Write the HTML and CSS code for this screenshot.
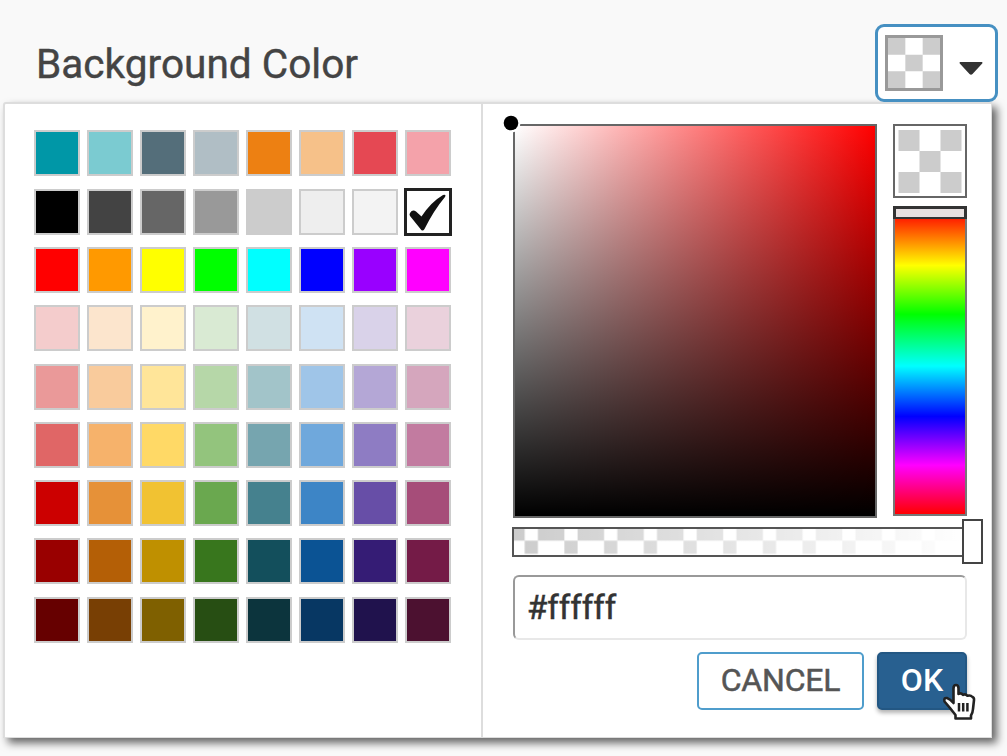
FILE: index.html
```html
<!DOCTYPE html>
<html lang="en">
<head>
<meta charset="utf-8">
<title>Background Color</title>
<link rel="stylesheet" href="styles.css">
</head>
<body>
<header class="header">
  <h1 class="title">Background Color</h1>
  <button class="trigger" aria-label="Choose color">
    <svg class="trigger-preview" viewBox="0 0 51 51" preserveAspectRatio="none"><path fill="#fff" d="M0 0h51v51H0z"/><path fill="#ccc" d="M0 0h17v17H0zM34 0h17v17H34zM17 17h17v17H17zM0 34h17v17H0zM34 34h17v17H34z"/></svg>
    <svg class="caret" viewBox="0 0 24 13"><path fill="#333" d="M1 0h22q1 .8 0 1.800L13.500 12q-1.500 1.500-3 0L1 1.800Q0 .8 1 0z"/></svg>
  </button>
</header>
<main class="panel">
  <section class="palette" id="palette"></section>
  <section class="picker">
    <div class="spectrum">
      <div class="shade"><svg class="shade-dot" viewBox="0 0 20 20"><circle cx="10" cy="10" r="9.500" fill="#fff"/><circle cx="10" cy="10" r="7.300" fill="#000"/></svg></div>
      <div class="side">
        <div class="preview"><svg class="preview-checks" viewBox="0 0 63 63"><path fill="#ccc" d="M0 0h21v21H0zM42 0h21v21H42zM21 21h21v21H21zM0 42h21v21H0zM42 42h21v21H42z"/></svg></div>
        <div class="hue"><span class="hue-handle"></span></div>
      </div>
    </div>
    <div class="alpha">
      <svg class="alpha-checks" width="451" height="26">
        <defs>
          <pattern id="checks" x="-2.500" y="-1.500" width="39.700" height="39.700" patternUnits="userSpaceOnUse"><path fill="#ccc" d="M0 0h13.200v13.200H0zM26.400 0h13.300v13.200H26.400zM13.200 13.200h13.200v13.200H13.200z"/></pattern>
          <linearGradient id="fade"><stop offset="0" stop-color="#fff" stop-opacity="0"/><stop offset="1" stop-color="#fff"/></linearGradient>
        </defs>
        <rect width="451" height="26" fill="url(#checks)"/>
        <rect width="451" height="26" fill="url(#fade)"/>
      </svg>
      <span class="alpha-handle"></span>
    </div>
    <input class="hex" value="#ffffff" aria-label="Hex color">
    <div class="actions">
      <button class="button cancel">CANCEL</button>
      <button class="button ok">OK
        <svg class="cursor" viewBox="0 0 34 38"><path d="M11.500 20V5.500Q11.500 2 14 2t2.500 3.500V11q2.500-1.500 4.500.8 2.500-1.300 4.500 1 3-1 5 1.200 1.800.8 1.500 3L31 26q-.3 4-2 6.500v3H13.500V32L8 25 2.500 18.500Q1.500 14.500 5 15q3 1 6.500 5z" fill="#fff" stroke="#222" stroke-width="2.600" stroke-linejoin="round"/><path d="M17 20v8.500M21.200 20v8.500M25.400 20v8.500" stroke="#222" stroke-width="2.500"/></svg>
      </button>
    </div>
  </section>
</main>
<script src="palette.js"></script>
</body>
</html>
```
FILE: styles.css
```css
* { box-sizing: border-box; }
body {
  margin: 0;
  width: 1007px;
  height: 756px;
  overflow: hidden;
  background: #f9f9f9;
  font-family: Roboto, "Liberation Sans", sans-serif;
}
.header {
  display: flex;
  justify-content: space-between;
  height: 102px;
  padding: 24px 9px 0 36px;
  position: relative;
  z-index: 1;
}
.title {
  margin: 16px 0 0;
  font-size: 40.600px;
  line-height: 48px;
  font-weight: 400;
  color: #444;
  -webkit-text-stroke: .4px #444;
  white-space: nowrap;
}
.trigger {
  display: flex;
  align-items: flex-start;
  gap: 16px;
  width: 123px;
  height: 78px;
  padding: 8px 0 0 7px;
  border: 3px solid #4690c2;
  border-radius: 9px;
  background: #fff;
}
.trigger-preview { width: 58px; height: 56px; border: 3px solid #999; }
.caret { width: 24px; height: 13px; margin-top: 27px; }
.panel {
  display: flex;
  width: 989px;
  height: 636px;
  margin-left: 3px;
  border: 2px solid #ddd;
  border-right-width: 1px;
  border-bottom-width: 1px;
  border-radius: 3px 0 0 0;
  background: #fff;
  box-shadow: 5px 5px 8px rgba(0, 0, 0, .6);
}
.palette {
  display: grid;
  grid-template-columns: repeat(8, 46px);
  grid-auto-rows: 46px;
  gap: 12.300px 7px;
  align-content: start;
  width: 478px;
  padding: 26.400px 0 0 29px;
  border-right: 2px solid #ddd;
}
.swatch { border: 2px solid #ccc; }
.swatch.selected { margin: -1px; border: 3px solid #222; }
.check { display: block; width: 100%; height: 100%; }
.picker { width: 484px; padding: 20px 0 0 30px; }
.spectrum { display: flex; gap: 16px; height: 394px; }
.shade {
  position: relative;
  width: 364px;
  height: 394px;
  border: 2px solid #666;
  background: linear-gradient(to top, #000, transparent), linear-gradient(to right, #fff, #f00);
}
.shade-dot { position: absolute; left: -14px; top: -13px; width: 20px; height: 20px; }
.side { display: flex; flex-direction: column; gap: 9px; }
.preview { width: 74px; height: 74px; padding: 4px 3px; border: 2px solid #666; }
.preview-checks { display: block; width: 64px; height: 63px; }
.hue {
  position: relative;
  width: 74px;
  height: 309px;
  border: 2px solid #777;
  background: linear-gradient(#f00 1%, #ff0 18.500%, #0f0 34.500%, #0ff 51.500%, #00f 68%, #f0f 84%, #f00 100%);
}
.hue-handle {
  position: absolute;
  left: -2px;
  top: -3px;
  width: 74px;
  height: 13px;
  border: 3px solid #333;
  border-bottom-width: 2px;
  background: #e8e0e0;
}
.alpha { position: relative; width: 455px; height: 30px; margin: 9px 0 0 -1px; border: 2px solid #555; }
.alpha-checks { display: block; }
.alpha-handle { position: absolute; right: -18px; top: -10px; width: 21px; height: 45px; border: 2px solid #444; background: #fff; }
.hex {
  display: block;
  width: 454px;
  height: 65px;
  margin-top: 18px;
  padding: 0 12px;
  border: 2px solid;
  border-color: #999 #e8e8e8 #e8e8e8 #999;
  border-radius: 6px;
  background: #fff;
  font: 33px Roboto, "Liberation Sans", sans-serif;
  color: #333;
  -webkit-text-stroke: .5px #333;
}
.actions { display: flex; justify-content: flex-end; gap: 13px; width: 454px; margin-top: 12px; }
.button { height: 58px; padding: 0 0 2px; border-radius: 5px; font: 33px Roboto, "Liberation Sans", sans-serif; }
.cancel { width: 167px; border: 2px solid #4f9dcc; background: #fff; color: #555; font-size: 32px; letter-spacing: -.2px; -webkit-text-stroke: .5px #555; }
.ok { position: relative; width: 90px; border: 2px solid #235783; background: #286090; color: #fff; font-size: 32px; font-weight: 500; box-shadow: 0 3px 4px rgba(0, 0, 0, .3); }
.cursor { position: absolute; left: 63px; top: 29px; width: 34px; height: 38px; }
```
FILE: palette.js
```js
const colors = `
0097a7 7bcbd1 546e7a b0bec5 ed8012 f6c189 e54853 f4a2aa
000000 434343 666666 999999 cccccc eeeeee f3f3f3 ffffff
ff0000 ff9900 ffff00 00ff00 00ffff 0000ff 9900ff ff00ff
f4cccc fce5cd fff2cc d9ead3 d0e0e3 cfe2f3 d9d2e9 ead1dc
ea9999 f9cb9c ffe599 b6d7a8 a2c4c9 9fc5e8 b4a7d6 d5a6bd
e06666 f6b26b ffd966 93c47d 76a5af 6fa8dc 8e7cc3 c27ba0
cc0000 e69138 f1c232 6aa84f 45818e 3d85c6 674ea7 a64d79
990000 b45f06 bf9000 38761d 134f5c 0b5394 351c75 741b47
660000 783f04 7f6000 274e13 0c343d 073763 20124d 4c1130`.trim().split(/\s+/);
const palette = document.getElementById("palette");
colors.forEach((color) => {
  const swatch = document.createElement("div");
  swatch.className = "swatch";
  swatch.style.background = "#" + color;
  if (color === "ffffff") {
    swatch.classList.add("selected");
    swatch.innerHTML = '<svg class="check" viewBox="0 0 42 42"><path fill="#111" d="M3 22q2.500-4 6-1.500l5.500 5Q24 11 36 4q3.500-1 2 2Q27 19 17.500 38q-2 3-4 0L3 25q-1-1.500 0-3z"/></svg>';
  }
  palette.appendChild(swatch);
});
```
